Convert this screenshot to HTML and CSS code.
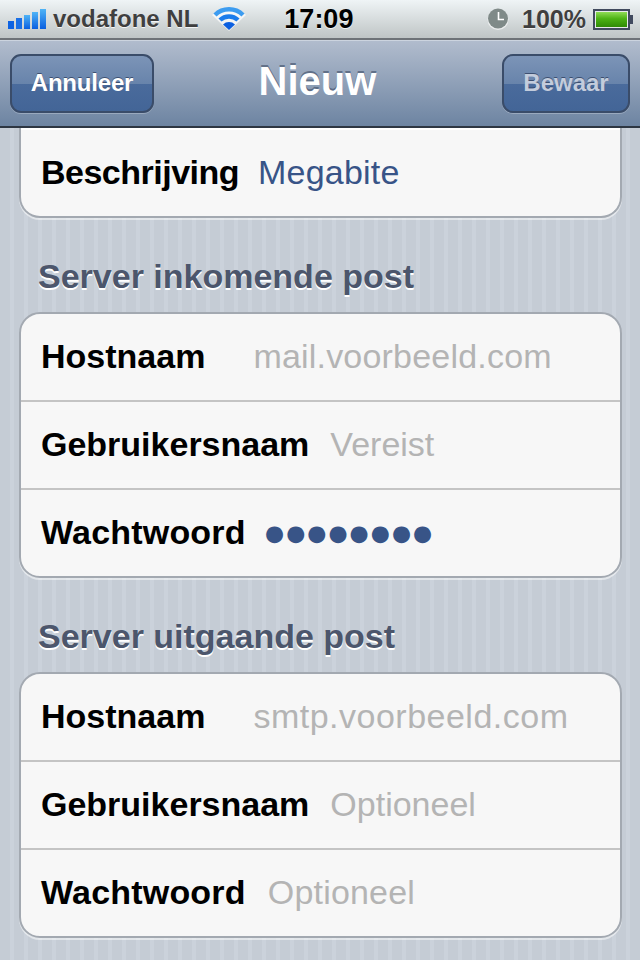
FILE: index.html

```html
<!DOCTYPE html>
<html lang="nl">
<head>
    <meta charset="UTF-8">
    <meta name="viewport" content="width=device-width, initial-scale=1.0">
    <title>Nieuw</title>
    <link rel="stylesheet" href="styles.css">
</head>
<body>

    <div id="status-bar">
        <svg class="signal" width="38" height="21" viewBox="0 0 38 21">
            <defs>
                <linearGradient id="bar-blue" x1="0" y1="0" x2="0" y2="1">
                    <stop offset="0" stop-color="#4fb4f6"/>
                    <stop offset="1" stop-color="#0a5fe0"/>
                </linearGradient>
            </defs>
            <rect x="0" y="12" width="6" height="8" fill="#0d63e2"/>
            <rect x="8" y="9" width="6" height="11" fill="#1a70e6"/>
            <rect x="16" y="6" width="6" height="14" fill="url(#bar-blue)"/>
            <rect x="24" y="3" width="6" height="17" fill="url(#bar-blue)"/>
            <rect x="32" y="0" width="6" height="20" fill="url(#bar-blue)"/>
        </svg>
        <span class="carrier">vodafone NL</span>
        <svg class="wifi" width="34" height="26" viewBox="0 0 34 26">
            <path d="M17 25 L0 9 A25 25 0 0 1 34 9 Z" fill="#fff" opacity="0.7"/>
            <path d="M3 9 A20 20 0 0 1 31 9" fill="none" stroke="#3c9cf0" stroke-width="4.5"/>
            <path d="M8 14 A13 13 0 0 1 26 14" fill="none" stroke="#1b7ceb" stroke-width="4.5"/>
            <path d="M17 24 L11 18.5 A8.5 8.5 0 0 1 23 18.5 Z" fill="#0b5fe0"/>
        </svg>
        <span class="time">17:09</span>
        <svg class="clock" width="22" height="22" viewBox="0 0 22 22">
            <circle cx="11" cy="11.5" r="10.5" fill="#fff" opacity="0.6"/>
            <circle cx="11" cy="10.5" r="10" fill="#7f8a88"/>
            <path d="M11.5 4 V11.5 H17" fill="none" stroke="#fff" stroke-width="1.6"/>
        </svg>
        <span class="percent">100%</span>
        <svg class="battery" width="41" height="21" viewBox="0 0 41 21">
            <defs>
                <linearGradient id="battery-green" x1="0" y1="0" x2="0" y2="1">
                    <stop offset="0" stop-color="#8fdc55"/>
                    <stop offset="0.45" stop-color="#4cb214"/>
                    <stop offset="1" stop-color="#2f8a06"/>
                </linearGradient>
            </defs>
            <rect x="1" y="1" width="35" height="19" fill="#e6eaea" stroke="#414a5e" stroke-width="2"/>
            <rect x="3" y="3" width="31" height="15" fill="url(#battery-green)"/>
            <rect x="36" y="6" width="4" height="9" fill="#414a5e"/>
        </svg>
    </div>

    <div id="nav-bar">
        <button class="nav-btn btn-cancel">Annuleer</button>
        <h1>Nieuw</h1>
        <button class="nav-btn btn-save">Bewaar</button>
    </div>

    <div id="content">
        <div class="card card-cut">
            <div class="row">
                <span class="label tight">Beschrijving</span>
                <span class="value near">Megabite</span>
            </div>
        </div>

        <h2>Server inkomende post</h2>
        <div class="card">
            <div class="row">
                <span class="label">Hostnaam</span>
                <span class="value placeholder wide">mail.voorbeeld.com</span>
            </div>
            <div class="row">
                <span class="label">Gebruikersnaam</span>
                <span class="value placeholder short">Vereist</span>
            </div>
            <div class="row">
                <span class="label loose">Wachtwoord</span>
                <span class="value dots">●●●●●●●●</span>
            </div>
        </div>

        <h2>Server uitgaande post</h2>
        <div class="card">
            <div class="row">
                <span class="label">Hostnaam</span>
                <span class="value placeholder wide spaced">smtp.voorbeeld.com</span>
            </div>
            <div class="row">
                <span class="label">Gebruikersnaam</span>
                <span class="value placeholder short">Optioneel</span>
            </div>
            <div class="row">
                <span class="label loose">Wachtwoord</span>
                <span class="value placeholder">Optioneel</span>
            </div>
        </div>
    </div>

</body>
</html>
```

FILE: styles.css

```css
* {
    box-sizing: border-box;
    margin: 0;
    padding: 0;
}
html, body {
    height: 100%;
    overflow: hidden;
}
body {
    font-family: "Liberation Sans", Arial, sans-serif;
    background-color: #c5ccd5;
}
#status-bar {
    display: flex;
    align-items: center;
    height: 40px;
    padding: 0 6px 0 8px;
    background: linear-gradient(#eff4f6, #bfc5c5);
    border-bottom: 2px solid #6e7377;
    color: #3f3f3f;
    font-weight: bold;
    text-shadow: 0 1px 0 rgba(255, 255, 255, 0.8);
}
.carrier {
    margin-left: 7px;
    font-size: 24px;
}
.wifi {
    margin-left: 14px;
}
.time {
    margin-left: 38px;
    font-size: 27px;
    color: #000;
}
.clock {
    margin-left: auto;
}
.percent {
    margin-left: 13px;
    font-size: 25px;
}
.battery {
    margin-left: 7px;
}
#nav-bar {
    display: grid;
    grid-template-columns: 1fr auto 1fr;
    align-items: center;
    height: 88px;
    padding: 0 10px;
    background: linear-gradient(#b1bccd, #6d84a2);
    border-top: 1px solid #ccd4df;
    border-bottom: 2px solid #2d3642;
}
#nav-bar h1 {
    margin: 0 5px 4px 0;
    font-size: 40px;
    color: #fff;
    text-shadow: 0 -2px 0 rgba(60, 75, 100, 0.6);
}
.nav-btn {
    height: 59px;
    padding-bottom: 2px;
    border: 2px solid #3a4c69;
    border-radius: 11px;
    background: linear-gradient(#7c94b7 0, #6884ab 50%, #4a6b9c 50%, #436597 100%);
    box-shadow: 0 1px 0 rgba(255, 255, 255, 0.25);
    font-family: inherit;
    font-size: 24px;
    font-weight: bold;
    text-shadow: 0 -1px 0 rgba(40, 55, 85, 0.7);
}
.btn-cancel {
    width: 144px;
    letter-spacing: -0.2px;
    color: #fff;
}
.btn-save {
    justify-self: end;
    width: 128px;
    color: #c3ccdc;
}
#content {
    height: 832px;
    padding: 0 18px 0 19px;
    background-color: #c5ccd5;
    background-image: repeating-linear-gradient(90deg, #c5ccd5 0, #c5ccd5 10px, #cbd2db 10px, #cbd2db 14px);
    overflow: hidden;
}
.card {
    background-color: #f7f7f7;
    border: 2px solid #a3a9b1;
    border-radius: 21px;
    box-shadow: 0 2px 0 rgba(255, 255, 255, 0.5);
}
.card-cut {
    border-top: none;
    border-radius: 0 0 21px 21px;
    box-shadow: 0 2px 0 rgba(255, 255, 255, 0.5), inset 0 2px 0 #fff;
}
.row {
    display: flex;
    align-items: center;
    height: 88px;
    padding: 0 20px 2px;
    border-bottom: 2px solid #c4c4c4;
}
.row:last-child {
    height: 86px;
    border-bottom: none;
}
.card-cut .row:last-child {
    height: 88px;
    padding-bottom: 0;
}
.label {
    font-size: 34px;
    font-weight: bold;
    color: #000;
}
.tight {
    letter-spacing: -0.5px;
}
.loose {
    letter-spacing: 0.2px;
}
.value {
    margin-left: 22px;
    font-size: 34px;
    letter-spacing: 0.2px;
    color: #385487;
}
.near {
    margin-left: 19px;
}
.wide {
    margin-left: 48px;
}
.short {
    margin-left: 21px;
    letter-spacing: 0;
}
.spaced {
    letter-spacing: 0.5px;
}
.placeholder {
    color: #b4b4b4;
}
.dots {
    margin-left: 17px;
    padding-top: 2px;
    font-size: 39px;
    letter-spacing: -2.4px;
}
h2 {
    height: 94px;
    padding: 39px 0 0 19px;
    font-size: 34px;
    font-weight: bold;
    color: #4c566c;
    text-shadow: 0 2px 0 #fff;
}
```
